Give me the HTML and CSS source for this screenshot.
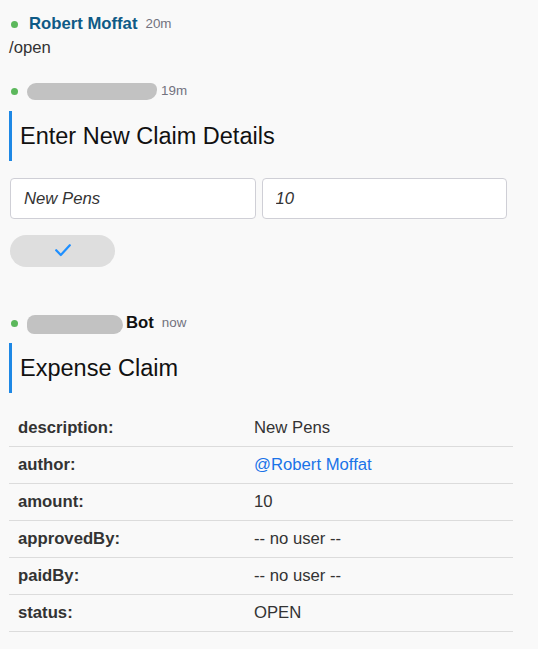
FILE: index.html
```html
<!DOCTYPE html>
<html>
<head>
<meta charset="utf-8">
<link rel="stylesheet" href="styles.css">
</head>
<body>
<div class="chat">
  <div class="msg msg-first">
    <div class="msg-head"><span class="dot"></span><span class="name">Robert Moffat</span><span class="time">20m</span></div>
    <div class="msg-body">/open</div>
  </div>

  <div class="msg msg-second">
    <div class="msg-head"><span class="dot"></span><span class="redact redact-a"></span><span class="time">19m</span></div>
    <h2 class="title">Enter New Claim Details</h2>
    <div class="fields">
      <input class="field" type="text" value="New Pens">
      <input class="field" type="text" value="10">
    </div>
    <button class="submit" type="button">
      <svg class="check" width="16" height="13" viewBox="0 0 16 13"><polyline points="1.2,6.2 5.8,11 14.8,1.2" fill="none" stroke="#1e8fff" stroke-width="2.2" stroke-linecap="round" stroke-linejoin="round"/></svg>
    </button>
  </div>

  <div class="msg msg-third">
    <div class="msg-head"><span class="dot"></span><span class="redact redact-b"></span><span class="bot">Bot</span><span class="time">now</span></div>
    <h2 class="title">Expense Claim</h2>
    <table class="details">
      <tr><th>description:</th><td>New Pens</td></tr>
      <tr><th>author:</th><td><a class="mention" href="#">@Robert Moffat</a></td></tr>
      <tr><th>amount:</th><td>10</td></tr>
      <tr><th>approvedBy:</th><td>-- no user --</td></tr>
      <tr><th>paidBy:</th><td>-- no user --</td></tr>
      <tr><th>status:</th><td>OPEN</td></tr>
    </table>
  </div>
</div>
</body>
</html>
```

FILE: styles.css
```css
html, body {
  margin: 0;
  padding: 0;
  background: #f9f9f9;
}
body {
  font-family: "Liberation Sans", Arial, sans-serif;
  font-size: 16.7px;
  color: #333;
}
.chat {
  padding: 14px 9px 0 9px;
}
.msg-head {
  display: flex;
  align-items: center;
  height: 20px;
  line-height: 20px;
}
.dot {
  width: 7px;
  height: 7px;
  border-radius: 50%;
  background: #5cb85c;
  margin-left: 2px;
  margin-right: 11px;
  flex: none;
}
.name {
  font-weight: bold;
  color: #0e5a86;
}
.time {
  font-size: 13.4px;
  color: #72727e;
  margin-left: 8px;
}
.msg-body {
  margin-top: 4px;
  height: 20px;
  line-height: 20px;
}
.msg-second {
  margin-top: 23px;
}
.redact {
  display: block;
  background: #c2c2c2;
  flex: none;
}
.redact-a {
  width: 130px;
  height: 17px;
  margin-left: -2px;
  border-radius: 9px 6px 10px 8px;
  margin-top: 1px;
}
.msg-second .time {
  margin-left: 4px;
}
.redact-b {
  width: 96px;
  height: 19px;
  margin-left: -2px;
  border-radius: 8px 10px 9px 7px;
  margin-top: 2px;
}
.bot {
  font-weight: bold;
  color: #111;
  margin-left: 3px;
}
.title {
  margin: 10px 0 0 0;
  height: 50px;
  line-height: 50px;
  border-left: 3px solid #1e88e5;
  padding-left: 8px;
  font-size: 23.5px;
  font-weight: normal;
  color: #111;
}
.fields {
  display: flex;
  gap: 6px;
  margin-top: 17px;
  margin-left: 1px;
  width: 497px;
}
.field {
  flex: 1;
  min-width: 0;
  box-sizing: border-box;
  height: 41px;
  border: 1px solid #cfcfd6;
  border-radius: 4px;
  background: #fff;
  padding: 0 13px;
  font-family: "Liberation Sans", Arial, sans-serif;
  font-size: 16.7px;
  font-style: italic;
  color: #333;
  outline: none;
}
.submit {
  display: flex;
  align-items: center;
  justify-content: center;
  margin: 16px 0 0 1px;
  width: 105px;
  height: 32px;
  border: none;
  border-radius: 16px;
  background: #dedede;
  padding: 0 0 1px 0;
}
.check {
  display: block;
}
.msg-third {
  margin-top: 46px;
}
.details {
  border-collapse: collapse;
  margin-top: 17px;
  width: 504px;
}
.details th,
.details td {
  height: 36px;
  padding: 0 9px;
  border-bottom: 1px solid #dcdcdc;
  text-align: left;
  vertical-align: middle;
  color: #333;
}
.details th {
  width: 218px;
  font-weight: bold;
}
.mention {
  color: #1a73e8;
  text-decoration: none;
}
```
